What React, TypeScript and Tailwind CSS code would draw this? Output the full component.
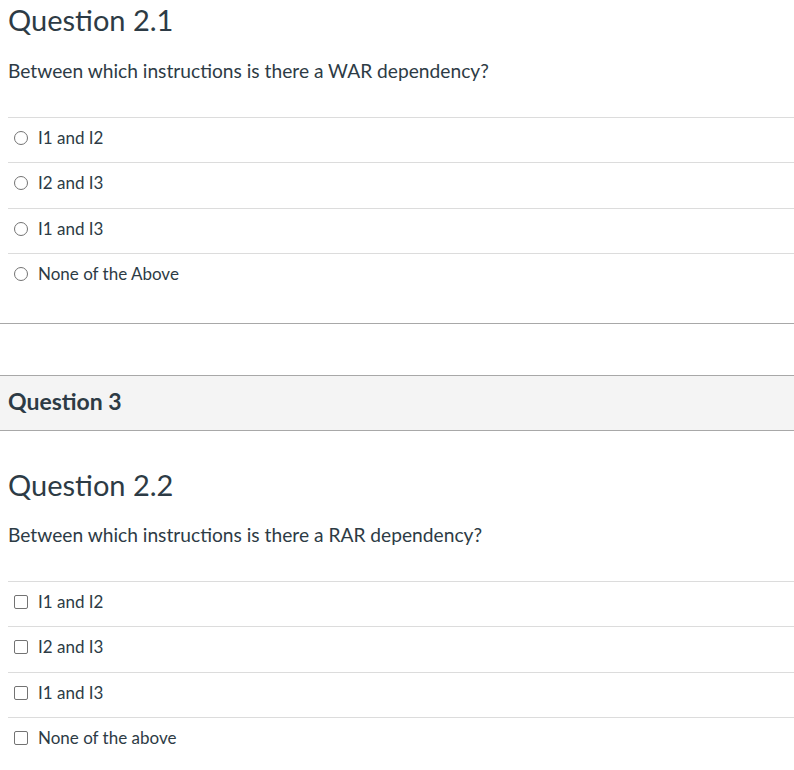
import React from 'react';

const q1Options = ['I1 and I2', 'I2 and I3', 'I1 and I3', 'None of the Above'];
const q2Options = ['I1 and I2', 'I2 and I3', 'I1 and I3', 'None of the above'];

// rows alternate 45/46px in the original
const rowHeights = ['h-[45px]', 'h-[46px]', 'h-[45px]', 'h-[45px]'];

function Radio() {
  return <span className="w-[14px] h-[14px] rounded-full border border-[#737373] bg-white shrink-0" />;
}

function Checkbox() {
  return <span className="w-[14px] h-[14px] rounded-[2px] border-[1.5px] border-[#737373] bg-white shrink-0" />;
}

function OptionList({ options, kind }: { options: string[]; kind: 'radio' | 'checkbox' }) {
  return (
    <div className="border-t border-[#dcdcdc]">
      {options.map((opt, i) => (
        <div
          key={opt}
          className={`${rowHeights[i]} pt-[10px] pl-[6px] ${i < options.length - 1 ? 'border-b border-[#dcdcdc]' : ''}`}
        >
          <label className="flex items-center gap-[10px] h-[20px] text-[17px] leading-[20px]">
            {kind === 'radio' ? <Radio /> : <Checkbox />}
            <span>{opt}</span>
          </label>
        </div>
      ))}
    </div>
  );
}

export default function App() {
  return (
    <div className="w-[794px] h-[770px] overflow-hidden bg-white text-[#2d3b45]" style={{ fontFamily: 'Lato, "Open Sans", sans-serif' }}>
      {/* Question 2.1 */}
      <section className="pl-2">
        <h2 className="pt-[3px] text-[29px] leading-[34px] font-normal">Question 2.1</h2>
        <p className="mt-[23px] text-[19.2px] leading-[22px]">Between which instructions is there a WAR dependency?</p>
        <div className="mt-[35px]">
          <OptionList options={q1Options} kind="radio" />
        </div>
      </section>

      <div className="mt-[24px] border-t border-[#a8a8a8] h-[52px]" />

      {/* Question 3 header */}
      <div className="border-y border-[#a8a8a8] bg-[#f4f4f4] h-[56px] flex items-center px-2">
        <h3 className="text-[23px] leading-[28px] font-bold pb-[5px]">Question 3</h3>
      </div>

      {/* Question 2.2 */}
      <section className="pl-2">
        <h2 className="pt-[37px] text-[29px] leading-[34px] font-normal">Question 2.2</h2>
        <p className="mt-[22px] text-[19.2px] leading-[22px]">Between which instructions is there a RAR dependency?</p>
        <div className="mt-[35px]">
          <OptionList options={q2Options} kind="checkbox" />
        </div>
      </section>
    </div>
  );
}
